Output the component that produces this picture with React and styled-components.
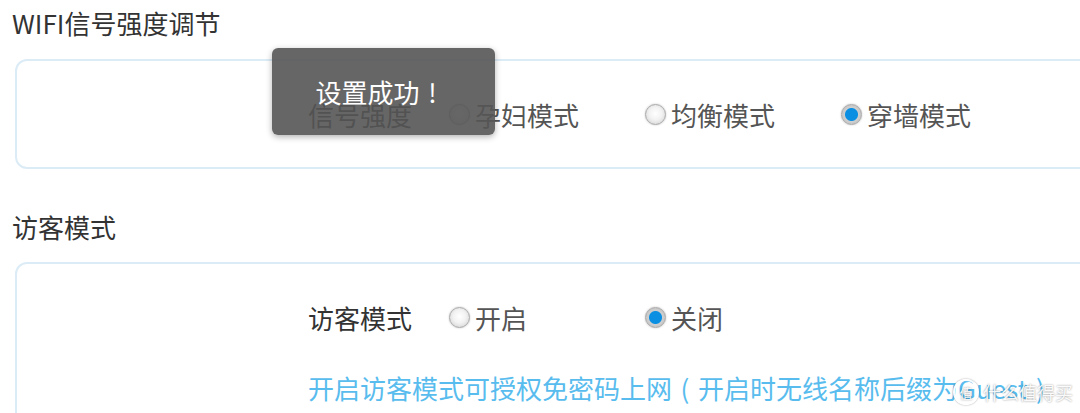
import React from 'react';
import styled, { createGlobalStyle } from 'styled-components';

const GlobalStyle = createGlobalStyle`
  html, body {
    margin: 0;
    padding: 0;
    background: #fff;
    overflow: hidden;
  }
  body {
    font-family: "Noto Sans CJK SC", "Noto Sans", sans-serif;
  }
`;

const Page = styled.div`
  position: relative;
  width: 1080px;
  height: 413px;
  padding-left: 12px;
  box-sizing: border-box;
  overflow: hidden;
`;

const SectionTitle = styled.div`
  font-size: 26px;
  line-height: 46px;
  color: #333;
  margin-top: ${props => props.first ? '0' : '35px'};
`;

const Card = styled.div`
  box-sizing: border-box;
  width: 1100px;
  margin-left: 3px;
  margin-top: ${props => props.first ? '13px' : '12px'};
  border: 2px solid #dcecf6;
  border-radius: 12px;
  padding-left: 291px;
  ${props => props.first ? `
    height: 110px;
    display: flex;
    align-items: center;
  ` : `
    height: 200px;
    padding-top: 33px;
  `}
`;

const Row = styled.div`
  display: flex;
  align-items: center;
  height: 40px;
`;

const Label = styled.span`
  width: 141px;
  font-size: 26px;
  color: #333;
`;

const Option = styled.label`
  width: 196px;
  display: flex;
  align-items: center;
  font-size: 26px;
  color: #555;
`;

const Radio = styled.span`
  width: 21px;
  height: 21px;
  box-sizing: border-box;
  border-radius: 50%;
  margin-right: 5px;
  flex-shrink: 0;
  border: 1px solid #a8a8a8;
  box-shadow: 0 0 2px rgba(0, 0, 0, 0.25);
  background: ${props => props.checked
    ? 'radial-gradient(circle, #0a8fe2 0, #0a8fe2 6px, #cfcfcf 7px, #bababa 100%)'
    : 'radial-gradient(circle at 50% 45%, #ffffff 0%, #f2f2f2 45%, #cccccc 100%)'};
`;

const Hint = styled.div`
  margin-top: 31px;
  font-size: 26px;
  line-height: 40px;
  color: #58bcee;
  white-space: nowrap;
`;

// centred full-width punctuation, as the original font draws it
const Punct = styled.span`
  display: inline-block;
  width: 26px;
  text-align: center;
`;

const Toast = styled.div`
  position: absolute;
  left: 272px;
  top: 48px;
  width: 223px;
  height: 87px;
  border-radius: 6px;
  background: rgba(85, 85, 85, 0.9);
  box-shadow: 0 2px 6px rgba(0, 0, 0, 0.3);
  display: flex;
  align-items: center;
  justify-content: center;
  color: #fff;
  font-size: 26px;
  padding-right: 6px;
  box-sizing: border-box;
`;

const Watermark = styled.div`
  position: absolute;
  left: 953px;
  top: 379px;
  display: flex;
  align-items: center;
  gap: 4px;
  color: rgba(255, 255, 255, 0.95);
  text-shadow: 0 0 2px rgba(0, 0, 0, 0.45);
  font-size: 18px;
`;

const MarkCircle = styled.span`
  width: 22px;
  height: 22px;
  border-radius: 50%;
  border: 2px solid rgba(255, 255, 255, 0.95);
  box-shadow: 0 0 2px rgba(0, 0, 0, 0.4);
  display: flex;
  align-items: center;
  justify-content: center;
  font-size: 13px;
`;

function RadioOption({ text, checked }) {
  return (
    <Option>
      <Radio checked={checked} />
      {text}
    </Option>
  );
}

export default function App() {
  return (
    <Page>
      <GlobalStyle />
      <SectionTitle first>WIFI信号强度调节</SectionTitle>
      <Card first>
        <Row>
          <Label>信号强度</Label>
          <RadioOption text="孕妇模式" />
          <RadioOption text="均衡模式" />
          <RadioOption text="穿墙模式" checked />
        </Row>
      </Card>

      <SectionTitle>访客模式</SectionTitle>
      <Card>
        <Row>
          <Label>访客模式</Label>
          <RadioOption text="开启" />
          <RadioOption text="关闭" checked />
        </Row>
        <Hint>
          开启访客模式可授权免密码上网<Punct>(</Punct>开启时无线名称后缀为Guest<Punct>)</Punct>
        </Hint>
      </Card>

      <Toast>设置成功<Punct>!</Punct></Toast>

      <Watermark>
        <MarkCircle>值</MarkCircle>
        什么值得买
      </Watermark>
    </Page>
  );
}
